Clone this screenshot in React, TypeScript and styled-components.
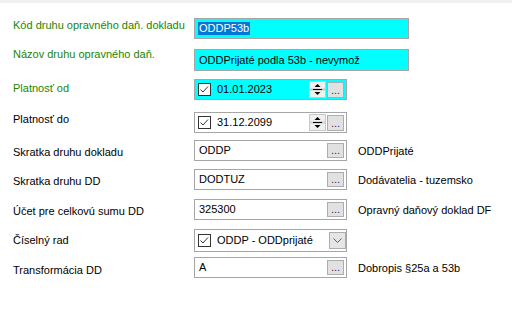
import React from "react";
import styled, { createGlobalStyle } from "styled-components";

const GlobalStyle = createGlobalStyle`
  html, body { margin: 0; padding: 0; background: #fff; }
  body { font-family: "Liberation Sans", Arial, sans-serif; font-size: 11px; color: #000; }
`;

const Page = styled.div`
  width: 512px;
  height: 321px;
  box-sizing: border-box;
  overflow: hidden;
  background: #fff;
  border-top: 3px solid #f0f0f0;
  padding: 15px 0 0 13px;
`;

const Row = styled.div<{ $h: number }>`
  display: flex;
  align-items: flex-start;
  height: ${(p) => p.$h}px;
`;

const Label = styled.div<{ $dy: number; $green?: boolean }>`
  width: 181px;
  flex: none;
  margin-top: ${(p) => p.$dy}px;
  line-height: 13px;
  white-space: nowrap;
  color: ${(p) => (p.$green ? "#1b8500" : "#000")};
`;

const Field = styled.div<{ $w: number; $h?: number; $cyan?: boolean }>`
  box-sizing: border-box;
  flex: none;
  width: ${(p) => p.$w}px;
  height: ${(p) => p.$h ?? 21}px;
  border: 1px solid #a6a6a6;
  background: ${(p) => (p.$cyan ? "#00ffff" : "#fff")};
  display: flex;
  align-items: center;
  padding-left: 3px;
`;

const FieldText = styled.span<{ $sel?: boolean }>`
  line-height: 13px;
  white-space: nowrap;
  padding: 0 1px;
  background: ${(p) => (p.$sel ? "#0078d7" : "transparent")};
  color: ${(p) => (p.$sel ? "#fff" : "#000")};
`;

const Check = styled.span`
  display: inline-flex;
  flex: none;
  width: 13px;
  height: 13px;
  margin-right: 5px;
`;

const Ellipsis = styled.button<{ $h?: number }>`
  box-sizing: border-box;
  flex: none;
  margin: 0 2px 0 auto;
  width: 17px;
  height: ${(p) => p.$h ?? 15}px;
  padding: 0 0 3px;
  border: 1px solid #adadad;
  background: #e1e1e1;
  font: 11px "Liberation Sans", Arial, sans-serif;
  color: #3a1a60;
  display: flex;
  align-items: flex-end;
  justify-content: center;
  line-height: 8px;
`;

const Spinner = styled.span`
  display: inline-flex;
  flex: none;
  margin-left: auto;
  width: 17px;
  height: 17px;
`;

const DateBtn = styled(Ellipsis)`
  margin-left: 1px;
`;

const DropBtn = styled.span`
  box-sizing: border-box;
  display: flex;
  align-items: center;
  justify-content: center;
  flex: none;
  margin-left: auto;
  width: 17px;
  height: 17px;
  border: 1px solid #adadad;
  background: #e5e5e5;
`;

const Desc = styled.div`
  margin: 5px 0 0 11px;
  line-height: 13px;
  white-space: nowrap;
`;

const CheckIcon = () => (
  <Check>
    <svg width="13" height="13" viewBox="0 0 13 13">
      <rect x="0.5" y="0.5" width="12" height="12" fill="#fff" stroke="#333" />
      <polyline points="2.5,6.5 5,9 10,3.5" fill="none" stroke="#333" strokeWidth="1" />
    </svg>
  </Check>
);

const SpinIcon = () => (
  <Spinner>
    <svg width="17" height="17" viewBox="0 0 17 17">
      <rect x="0.5" y="0.5" width="16" height="7.5" fill="#f0f0f0" stroke="#c8c8c8" />
      <rect x="0.5" y="9" width="16" height="7.5" fill="#f0f0f0" stroke="#c8c8c8" />
      <polygon points="5.5,6 11.5,6 8.5,3" fill="#000" />
      <line x1="4" y1="8.5" x2="13" y2="8.5" stroke="#000" />
      <polygon points="5.5,11 11.5,11 8.5,14" fill="#000" />
    </svg>
  </Spinner>
);

const Chevron = () => (
  <svg width="9" height="5" viewBox="0 0 9 5">
    <polyline points="0.5,0.5 4.5,4.5 8.5,0.5" fill="none" stroke="#606060" />
  </svg>
);

const DateField = ({ value, cyan }: { value: string; cyan?: boolean }) => (
  <Field $w={153} $cyan={cyan} $h={21}>
    <CheckIcon />
    <FieldText>{value}</FieldText>
    <SpinIcon />
    <DateBtn $h={16}>...</DateBtn>
  </Field>
);

const LookupField = ({ value }: { value: string }) => (
  <Field $w={153}>
    <FieldText>{value}</FieldText>
    <Ellipsis>...</Ellipsis>
  </Field>
);

export default function App() {
  return (
    <>
      <GlobalStyle />
      <Page>
        <Row $h={31}>
          <Label $dy={1} $green>Kód druhu opravného daň. dokladu</Label>
          <Field $w={215} $cyan>
            <FieldText $sel>ODDP53b</FieldText>
          </Field>
        </Row>
        <Row $h={30}>
          <Label $dy={-1} $green>Názov druhu opravného daň.</Label>
          <Field $w={215} $h={22} $cyan>
            <FieldText>ODDPrijaté podla 53b - nevymož</FieldText>
          </Field>
        </Row>
        <Row $h={33}>
          <Label $dy={3} $green>Platnosť od</Label>
          <DateField value="01.01.2023" cyan />
        </Row>
        <Row $h={28}>
          <Label $dy={1}>Platnosť do</Label>
          <DateField value="31.12.2099" />
        </Row>
        <Row $h={29}>
          <Label $dy={6}>Skratka druhu dokladu</Label>
          <LookupField value="ODDP" />
          <Desc>ODDPrijaté</Desc>
        </Row>
        <Row $h={30}>
          <Label $dy={6}>Skratka druhu DD</Label>
          <LookupField value="DODTUZ" />
          <Desc>Dodávatelia - tuzemsko</Desc>
        </Row>
        <Row $h={30}>
          <Label $dy={6}>Účet pre celkovú sumu DD</Label>
          <LookupField value="325300" />
          <Desc>Opravný daňový doklad DF</Desc>
        </Row>
        <Row $h={28}>
          <Label $dy={5}>Číselný rad</Label>
          <Field $w={153} $h={23}>
            <CheckIcon />
            <FieldText>ODDP - ODDprijaté</FieldText>
            <DropBtn>
              <Chevron />
            </DropBtn>
          </Field>
        </Row>
        <Row $h={30}>
          <Label $dy={7}>Transformácia DD</Label>
          <LookupField value="A" />
          <Desc>Dobropis §25a a 53b</Desc>
        </Row>
      </Page>
    </>
  );
}
